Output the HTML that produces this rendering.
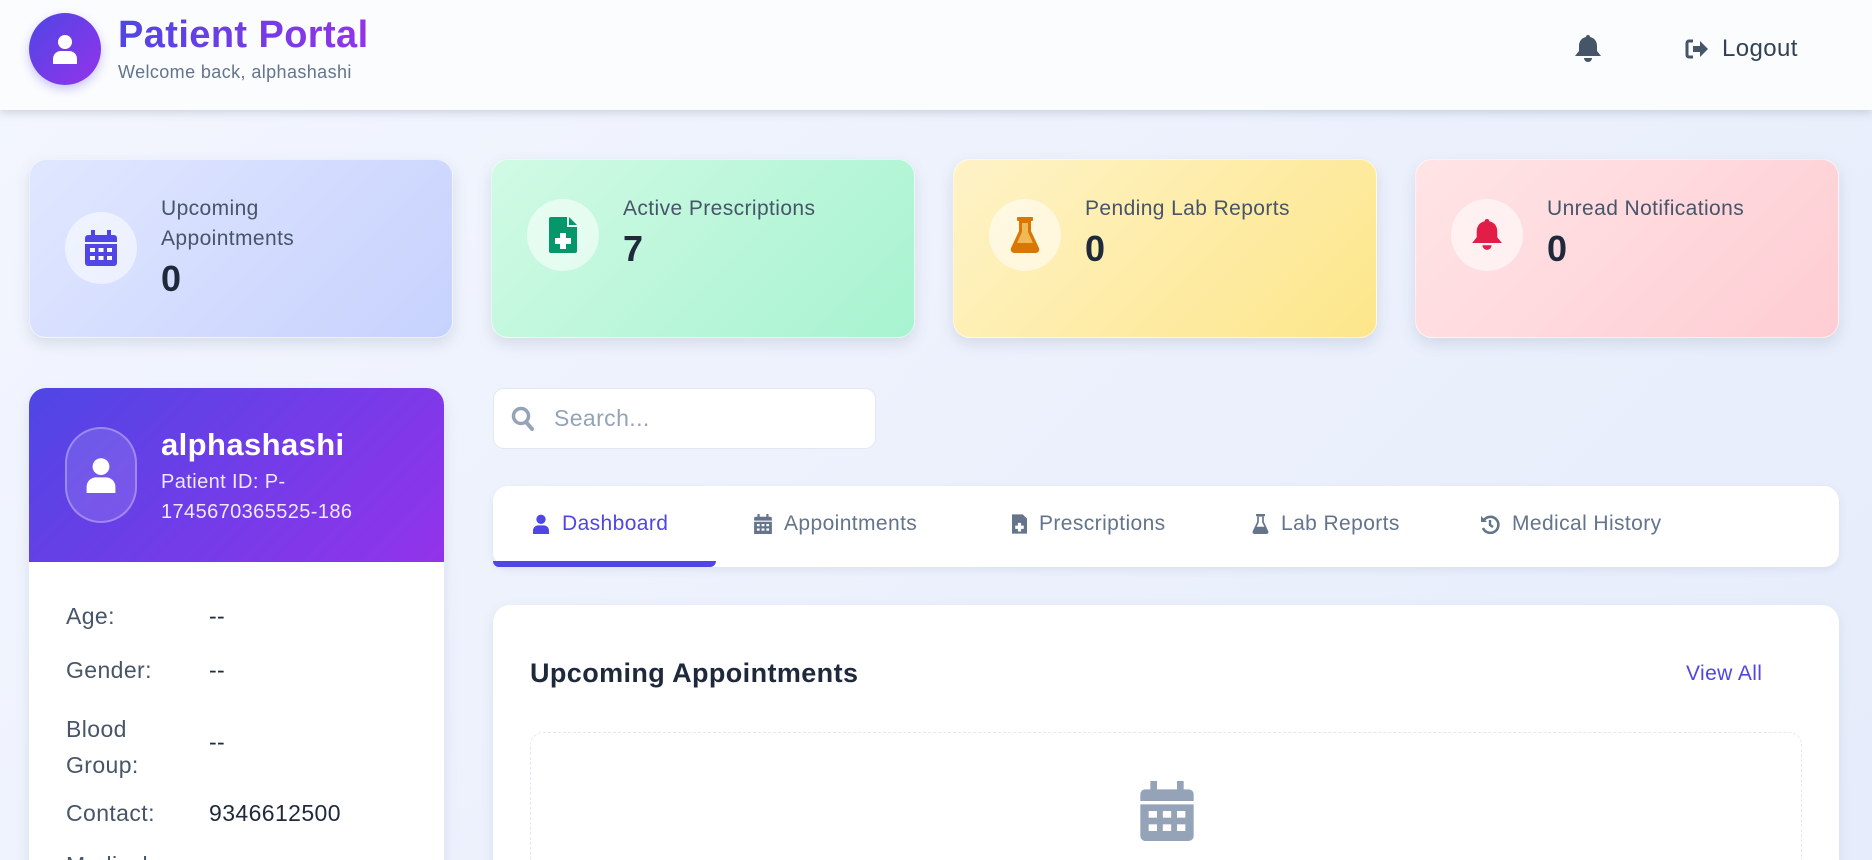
<!DOCTYPE html>
<html><head><meta charset="utf-8"><style>
*{box-sizing:border-box;margin:0;padding:0}
html,body{width:1872px;height:860px;overflow:hidden}
body{font-family:"Liberation Sans",sans-serif;color:#1e293b;letter-spacing:.4px}
#wrap{position:relative;width:1872px;height:860px;overflow:hidden;background:linear-gradient(135deg,#f3f6fe,#e6ecfb)}
.abs{position:absolute}
.hdr{left:0;top:0;width:1872px;height:110px;background:#fbfcfe;box-shadow:0 3px 8px rgba(100,116,139,.25)}
.card{border-radius:17px;box-shadow:0 6px 14px rgba(100,116,139,.18);border:1px solid rgba(255,255,255,.6)}
.ic{width:72px;height:72px;border-radius:50%;background:rgba(255,255,255,.55);display:flex;align-items:center;justify-content:center}
.lbl{font-size:21px;color:#475569;line-height:30px}
.num{font-size:36px;font-weight:bold;color:#1e293b}
.row{position:absolute;left:66px;font-size:23px;color:#475569}
.val{position:absolute;left:209px;font-size:23px;color:#1e293b}
.tab{position:absolute;top:512px;font-size:21px;color:#64748b;display:flex;align-items:center;gap:12px}
</style></head><body><div id="wrap">
<div class="abs hdr"></div>
<div class="abs" style="left:29px;top:13px;width:72px;height:72px;border-radius:50%;background:linear-gradient(135deg,#4f46e5,#9333ea);box-shadow:0 4px 10px rgba(79,70,229,.3);display:flex;align-items:center;justify-content:center">
<svg width="26" height="30" viewBox="0 0 26 30"><circle cx="13" cy="8" r="7" fill="#fff"/><path d="M1 30v-5c0-5 4-8 8-8h8c4 0 8 3 8 8v5z" fill="#fff"/></svg></div>
<div class="abs" style="left:118px;top:14px;font-size:38px;font-weight:bold;background:linear-gradient(90deg,#4f46e5,#9333ea);-webkit-background-clip:text;color:transparent">Patient Portal</div>
<div class="abs" style="left:118px;top:62px;font-size:18px;color:#64748b">Welcome back, alphashashi</div>
<svg class="abs" style="left:1574px;top:34px" width="28" height="30" viewBox="0 0 28 30"><path d="M14 1c1.5 0 2 1 2 2 5 1 7 5 7 9v5l4 5H1l4-5v-5c0-4 2-8 7-9 0-1 .5-2 2-2z" fill="#475569"/><path d="M10 24h8a4 4 0 0 1-8 0z" fill="#475569"/></svg>
<svg class="abs" style="left:1685px;top:39px" width="24" height="20" viewBox="0 0 24 20"><path d="M8 2H4a2 2 0 0 0-2 2v12a2 2 0 0 0 2 2h4" stroke="#475569" stroke-width="3" fill="none"/><path d="M8 7h7V2l8 8-8 8v-5H8z" fill="#475569"/></svg>
<div class="abs" style="left:1722px;top:35px;font-size:24px;color:#334155">Logout</div>

<div class="abs card" style="left:29px;top:159px;width:424px;height:179px;background:linear-gradient(135deg,#e0e7ff,#c7d2fe)"></div>
<div class="abs ic" style="left:65px;top:212px"><svg width="32" height="36" viewBox="0 0 32 36"><rect x="6" y="0" width="4" height="7" fill="#4f46e5"/><rect x="22" y="0" width="4" height="7" fill="#4f46e5"/><path d="M0 8a3 3 0 0 1 3-3h26a3 3 0 0 1 3 3v4H0zM0 14h32v19a3 3 0 0 1-3 3H3a3 3 0 0 1-3-3z" fill="#4f46e5"/><g fill="#fff"><rect x="5" y="18" width="5" height="4"/><rect x="13.5" y="18" width="5" height="4"/><rect x="22" y="18" width="5" height="4"/><rect x="5" y="26" width="5" height="4"/><rect x="13.5" y="26" width="5" height="4"/><rect x="22" y="26" width="5" height="4"/></g></svg></div>
<div class="abs lbl" style="left:161px;top:194px">Upcoming<br>Appointments</div>
<div class="abs num" style="left:161px;top:258px">0</div>

<div class="abs card" style="left:491px;top:159px;width:424px;height:179px;background:linear-gradient(135deg,#d1fae5,#a7f3d0)"></div>
<div class="abs ic" style="left:527px;top:199px"><svg width="28" height="36" viewBox="0 0 28 36"><path d="M0 2a2 2 0 0 1 2-2h16v10h10v24a2 2 0 0 1-2 2H2a2 2 0 0 1-2-2z" fill="#059669"/><path d="M20 0l8 8h-8z" fill="#059669"/><path d="M11 16h6v5h5v6h-5v5h-6v-5H6v-6h5z" fill="#fff"/></svg></div>
<div class="abs lbl" style="left:623px;top:194px">Active Prescriptions</div>
<div class="abs num" style="left:623px;top:228px">7</div>

<div class="abs card" style="left:953px;top:159px;width:424px;height:179px;background:linear-gradient(135deg,#fef3c7,#fde68a)"></div>
<div class="abs ic" style="left:989px;top:199px"><svg width="30" height="36" viewBox="0 0 30 36"><rect x="7" y="0" width="16" height="4" rx="1" fill="#d97706"/><path d="M9 4h12v10l8 17c1 3-1 5-4 5H5c-3 0-5-2-4-5l8-17z" fill="#d97706"/><path d="M12 6h6v9l5 11H7l5-11z" fill="#fde68a" opacity=".6"/></svg></div>
<div class="abs lbl" style="left:1085px;top:194px">Pending Lab Reports</div>
<div class="abs num" style="left:1085px;top:228px">0</div>

<div class="abs card" style="left:1415px;top:159px;width:424px;height:179px;background:linear-gradient(135deg,#ffe4e6,#fecdd3)"></div>
<div class="abs ic" style="left:1451px;top:199px"><svg width="32" height="36" viewBox="0 0 28 30"><path d="M14 1c1.5 0 2 1 2 2 5 1 7 5 7 9v5l4 5H1l4-5v-5c0-4 2-8 7-9 0-1 .5-2 2-2z" fill="#e11d48"/><path d="M10 24h8a4 4 0 0 1-8 0z" fill="#e11d48"/></svg></div>
<div class="abs lbl" style="left:1547px;top:194px">Unread Notifications</div>
<div class="abs num" style="left:1547px;top:228px">0</div>

<div class="abs" style="left:29px;top:388px;width:415px;height:520px;background:#fff;border-radius:17px;overflow:hidden;box-shadow:0 6px 14px rgba(100,116,139,.15)">
<div style="height:174px;background:linear-gradient(135deg,#4f46e5,#9333ea)"></div></div>
<div class="abs" style="left:65px;top:427px;width:72px;height:96px;border-radius:36px;border:2px solid rgba(255,255,255,.3);background:rgba(255,255,255,.12);display:flex;align-items:center;justify-content:center"><svg width="32" height="36" viewBox="0 0 26 30"><circle cx="13" cy="8" r="7" fill="#fff"/><path d="M1 30v-5c0-5 4-8 8-8h8c4 0 8 3 8 8v5z" fill="#fff"/></svg></div>
<div class="abs" style="left:161px;top:427px;font-size:31px;font-weight:bold;color:#fff">alphashashi</div>
<div class="abs" style="left:161px;top:467px;font-size:20px;line-height:30px;color:#ede9fe">Patient ID: P-<br>1745670365525-186</div>
<div class="row" style="top:603px">Age:</div><div class="val" style="top:603px">--</div>
<div class="row" style="top:657px">Gender:</div><div class="val" style="top:657px">--</div>
<div class="row" style="top:711px;line-height:36px">Blood<br>Group:</div><div class="val" style="top:729px">--</div>
<div class="row" style="top:800px">Contact:</div><div class="val" style="top:800px">9346612500</div>
<div class="row" style="top:852px">Medical</div>

<div class="abs" style="left:493px;top:388px;width:383px;height:61px;background:#fff;border:1px solid #e2e8f0;border-radius:11px"></div>
<svg class="abs" style="left:511px;top:406px" width="24" height="26" viewBox="0 0 24 26"><circle cx="10" cy="10" r="7.5" stroke="#94a3b8" stroke-width="3.5" fill="none"/><path d="M15 16l6 7" stroke="#94a3b8" stroke-width="4" stroke-linecap="round"/></svg>
<div class="abs" style="left:554px;top:405px;font-size:23px;color:#94a3b8">Search...</div>

<div class="abs" style="left:493px;top:486px;width:1346px;height:81px;background:#fff;border-radius:15px;box-shadow:0 3px 8px rgba(100,116,139,.12)"></div>
<div class="abs" style="left:493px;top:561px;width:223px;height:6px;background:#4f46e5;border-radius:0 0 6px 6px"></div>
<div class="tab" style="left:532px;color:#4f46e5"><svg width="18" height="20" viewBox="0 0 26 30"><circle cx="13" cy="8" r="7" fill="#4f46e5"/><path d="M1 30v-5c0-5 4-8 8-8h8c4 0 8 3 8 8v5z" fill="#4f46e5"/></svg>Dashboard</div>
<div class="tab" style="left:754px"><svg width="18" height="20" viewBox="0 0 32 36"><rect x="6" y="0" width="4" height="7" fill="#64748b"/><rect x="22" y="0" width="4" height="7" fill="#64748b"/><path d="M0 8a3 3 0 0 1 3-3h26a3 3 0 0 1 3 3v4H0zM0 14h32v22H0z" fill="#64748b"/><g fill="#fff"><rect x="5" y="18" width="5" height="4"/><rect x="13.5" y="18" width="5" height="4"/><rect x="22" y="18" width="5" height="4"/><rect x="5" y="26" width="5" height="4"/><rect x="13.5" y="26" width="5" height="4"/><rect x="22" y="26" width="5" height="4"/></g></svg>Appointments</div>
<div class="tab" style="left:1012px"><svg width="15" height="20" viewBox="0 0 28 36"><path d="M0 0h20l8 8v28H0z" fill="#64748b"/><path d="M11 16h6v5h5v6h-5v5h-6v-5H6v-6h5z" fill="#fff"/></svg>Prescriptions</div>
<div class="tab" style="left:1252px"><svg width="17" height="20" viewBox="0 0 30 36"><rect x="7" y="0" width="16" height="4" fill="#64748b"/><path d="M9 4h12v10l8 17c1 3-1 5-4 5H5c-3 0-5-2-4-5l8-17z" fill="#64748b"/><path d="M12 5h6v10l4 8H8l4-8z" fill="#fff"/></svg>Lab Reports</div>
<div class="tab" style="left:1480px"><svg width="20" height="20" viewBox="0 0 20 20"><path d="M4 6A8 8 0 1 1 3 14" stroke="#64748b" stroke-width="2.6" fill="none"/><path d="M1 2v6h6z" fill="#64748b"/><path d="M10 6v5l3 2" stroke="#64748b" stroke-width="2.4" fill="none"/></svg>Medical History</div>

<div class="abs" style="left:493px;top:605px;width:1346px;height:320px;background:#fff;border-radius:17px;box-shadow:0 4px 12px rgba(100,116,139,.12)"></div>
<div class="abs" style="left:530px;top:658px;font-size:27px;font-weight:bold;color:#1e293b">Upcoming Appointments</div>
<div class="abs" style="left:1686px;top:662px;font-size:21px;color:#4f46e5">View All</div>
<div class="abs" style="left:530px;top:732px;width:1272px;height:200px;border:1px dashed #e2e8f0;border-radius:13px"></div>
<svg class="abs" style="left:1140px;top:781px" width="54" height="60" viewBox="0 0 32 36"><rect x="6" y="0" width="4" height="7" fill="#94a3b8"/><rect x="22" y="0" width="4" height="7" fill="#94a3b8"/><path d="M0 8a3 3 0 0 1 3-3h26a3 3 0 0 1 3 3v4H0zM0 14h32v19a3 3 0 0 1-3 3H3a3 3 0 0 1-3-3z" fill="#94a3b8"/><g fill="#fff"><rect x="5" y="18" width="5" height="4"/><rect x="13.5" y="18" width="5" height="4"/><rect x="22" y="18" width="5" height="4"/><rect x="5" y="26" width="5" height="4"/><rect x="13.5" y="26" width="5" height="4"/><rect x="22" y="26" width="5" height="4"/></g></svg>
</div></body></html>
